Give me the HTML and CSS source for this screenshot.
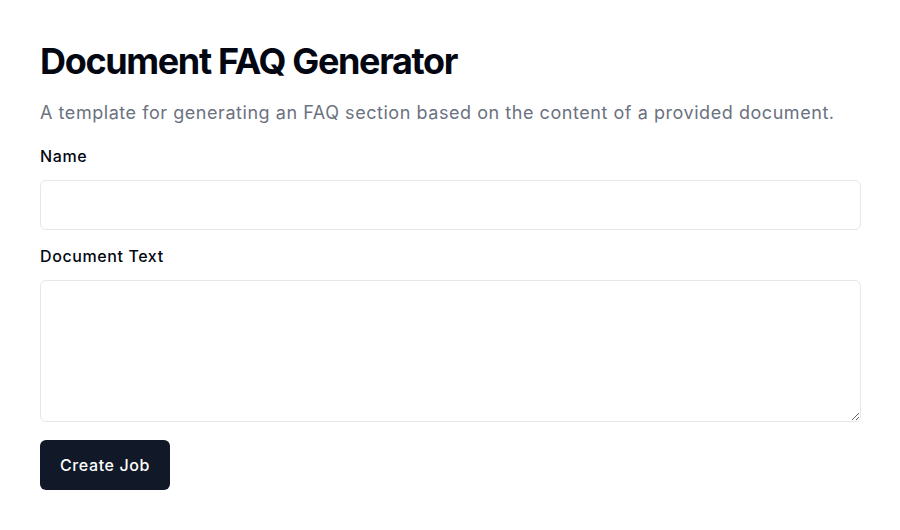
FILE: index.html
```html
<!DOCTYPE html>
<html lang="en">
<head>
<meta charset="utf-8">
<title>Document FAQ Generator</title>
<link rel="stylesheet" href="styles.css">
</head>
<body>
<main class="page">
  <h1 class="title">Document FAQ Generator</h1>
  <p class="subtitle">A template for generating an FAQ section based on the content of a provided document.</p>
  <form class="form">
    <div class="field">
      <label class="label" for="name">Name</label>
      <input class="input" id="name" type="text">
    </div>
    <div class="field">
      <label class="label" for="doc">Document Text</label>
      <textarea class="textarea" id="doc"></textarea>
    </div>
    <div class="actions">
      <button class="button" type="button">Create Job</button>
    </div>
  </form>
</main>
</body>
</html>
```

FILE: styles.css
```css
* { box-sizing: border-box; }
html, body { margin: 0; padding: 0; background: #ffffff; }
body {
  font-family: Inter, "Noto Sans", "Liberation Sans", sans-serif;
  color: #030712;
}
.page {
  width: 821px;
  margin-left: 40px;
  padding-top: 41px;
}
.title {
  margin: 0;
  font-size: 36px;
  line-height: 40px;
  font-weight: 700;
  letter-spacing: -1.35px;
  color: #030712;
}
.subtitle {
  margin: 18px 0 0;
  font-size: 18px;
  line-height: 28px;
  letter-spacing: 0.55px;
  color: #6b7280;
}
.form {
  margin-top: 17px;
  display: flex;
  flex-direction: column;
  gap: 14px;
}
.field {
  display: flex;
  flex-direction: column;
  gap: 12px;
}
.label {
  font-size: 16px;
  line-height: 24px;
  font-weight: 500;
  letter-spacing: 0.6px;
  color: #030712;
}
.input, .textarea {
  width: 100%;
  border: 1px solid #e5e7eb;
  border-radius: 6px;
  background: #fff;
  font: inherit;
  margin: 0;
}
.input { height: 50px; padding: 0 12px; }
.textarea { height: 142px; padding: 8px 12px; resize: vertical; display: block; }
.actions { margin-top: 4px; }
.button {
  height: 50px;
  padding: 0 20px;
  border: none;
  border-radius: 6px;
  background: #111827;
  color: #ffffff;
  font-family: inherit;
  font-size: 16px;
  font-weight: 500;
  line-height: 24px;
  letter-spacing: 0.6px;
}
```
